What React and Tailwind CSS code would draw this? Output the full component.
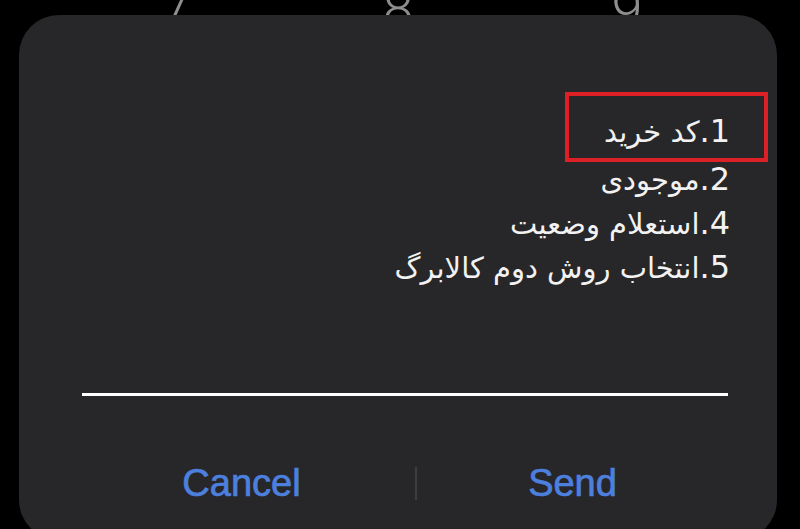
export default function App() {
  const lines = [
    ["1.", "کد خرید"],
    ["2.", "موجودی"],
    ["4.", "استعلام وضعیت"],
    ["5.", "انتخاب روش دوم کالابرگ"],
  ];
  return (
    <div className="w-[800px] h-[529px] bg-black overflow-hidden">
      <div className="h-[15px] flex items-start text-[56px] leading-none font-light text-[#8e8e8e] [font-family:Roboto,'DejaVu_Sans',sans-serif]">
        <span className="w-[60px] text-center -mt-[19px] ml-[145px]">7</span>
        <span className="w-[60px] text-center -mt-[19px] ml-[163px]">8</span>
        <span className="w-[60px] text-center -mt-[19px] ml-[169px]">9</span>
      </div>
      <div className="relative ml-[19px] w-[758px] h-[525px] rounded-[40px] bg-[#272729] pt-[95px]">
        <div
          dir="rtl"
          className="pr-[47px] text-[29px] leading-[44px] text-[#f2f2f2] [font-family:'DejaVu_Sans',sans-serif]"
        >
          {lines.map((l, i) => (
            <div key={i} className={i === 0 ? "h-[44px] mb-[4px]" : "h-[44px]"}>
              <span className="text-[32px] leading-none">{l[0]}</span>
              {l[1]}
            </div>
          ))}
        </div>
        <div className="absolute left-[546px] top-[77px] w-[203px] h-[70px] border-[4px] border-[#dd1f26]" />
        <div className="mt-[103px] ml-[63px] mr-[49px] h-[3px] bg-white" />
        <div className="mt-[68px] ml-[63px] mr-[49px] flex items-center text-[38px] leading-none text-[#4d80de] [font-family:'Liberation_Sans',Arial,sans-serif] [-webkit-text-stroke:0.7px_#4d80de]">
          <div className="w-[333px] pr-[14px] text-center">Cancel</div>
          <div className="w-[2px] h-[33px] bg-[#3d3d3f]" />
          <div className="flex-1 text-center">Send</div>
        </div>
      </div>
    </div>
  );
}
